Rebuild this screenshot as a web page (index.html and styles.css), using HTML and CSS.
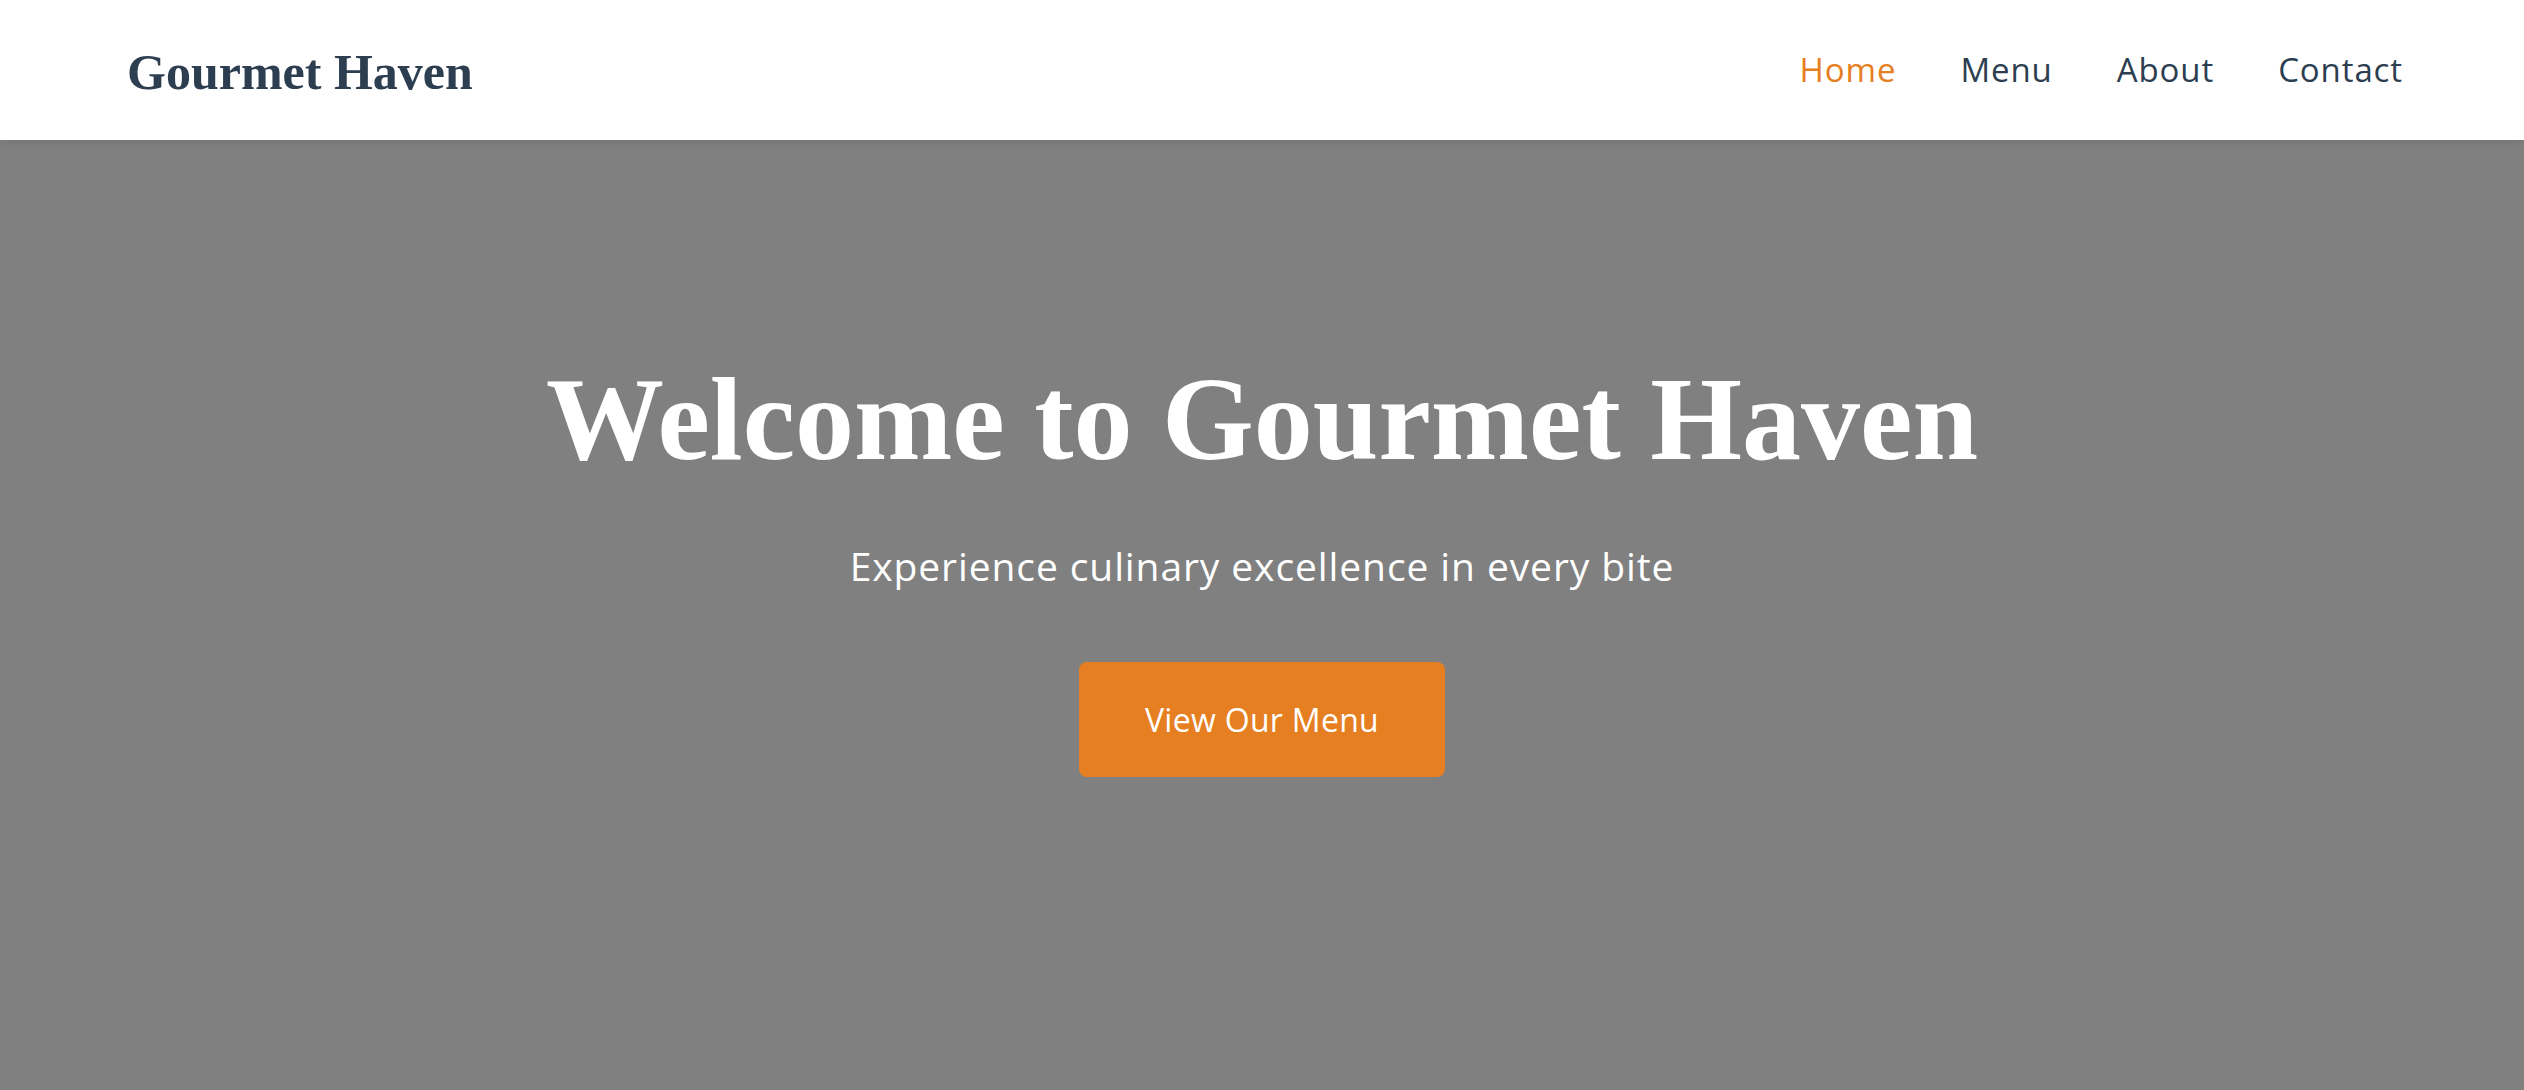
FILE: index.html
```
<!DOCTYPE html>
<html lang="en">
<head>
<meta charset="utf-8">
<title>Gourmet Haven</title>
<link rel="stylesheet" href="styles.css">
</head>
<body>
<header class="site-header">
  <div class="logo">Gourmet Haven</div>
  <nav class="nav">
    <a href="#" class="nav-link active">Home</a>
    <a href="#" class="nav-link">Menu</a>
    <a href="#" class="nav-link">About</a>
    <a href="#" class="nav-link">Contact</a>
  </nav>
</header>
<section class="hero">
  <h1 class="hero-title">Welcome to Gourmet Haven</h1>
  <p class="hero-sub">Experience culinary excellence in every bite</p>
  <a href="#" class="btn">View Our Menu</a>
</section>
</body>
</html>
```
FILE: styles.css
```
* { box-sizing: border-box; }
html, body { margin: 0; padding: 0; height: 100%; }
body {
  font-family: "Open Sans", "Liberation Sans", sans-serif;
  background: #808080;
  overflow: hidden;
}
.site-header {
  height: 140px;
  background: #ffffff;
  display: flex;
  align-items: center;
  justify-content: space-between;
  padding: 0 121px 0 127px;
  box-shadow: 0 2px 10px rgba(0,0,0,0.1);
  position: relative;
  z-index: 2;
}
.logo {
  font-family: "Liberation Serif", "Times New Roman", serif;
  font-weight: 700;
  font-size: 50px;
  color: #2c3e50;
  padding-top: 4px;
}
.nav {
  display: flex;
  gap: 64px;
}
.nav-link {
  font-size: 33px;
  letter-spacing: 0.9px;
  color: #2c3e50;
  text-decoration: none;
  line-height: 1.5;
}
.nav-link.active { color: #e67e22; }
.hero {
  height: calc(100vh - 140px);
  background: #808080;
  display: flex;
  flex-direction: column;
  align-items: center;
  padding-top: 209px;
  color: #ffffff;
  text-align: center;
}
.hero-title {
  font-family: "Liberation Serif", "Times New Roman", serif;
  font-weight: 700;
  font-size: 118px;
  line-height: 1.2;
  margin: 0 0 46px;
}
.hero-sub {
  font-size: 39px;
  letter-spacing: 0.9px;
  line-height: 57px;
  margin: 0 0 68px;
}
.btn {
  display: inline-block;
  background: #e67e22;
  color: #ffffff;
  text-decoration: none;
  font-size: 32px;
  letter-spacing: 0.3px;
  line-height: 49px;
  padding: 33px 66px;
  border-radius: 8px;
}
```
